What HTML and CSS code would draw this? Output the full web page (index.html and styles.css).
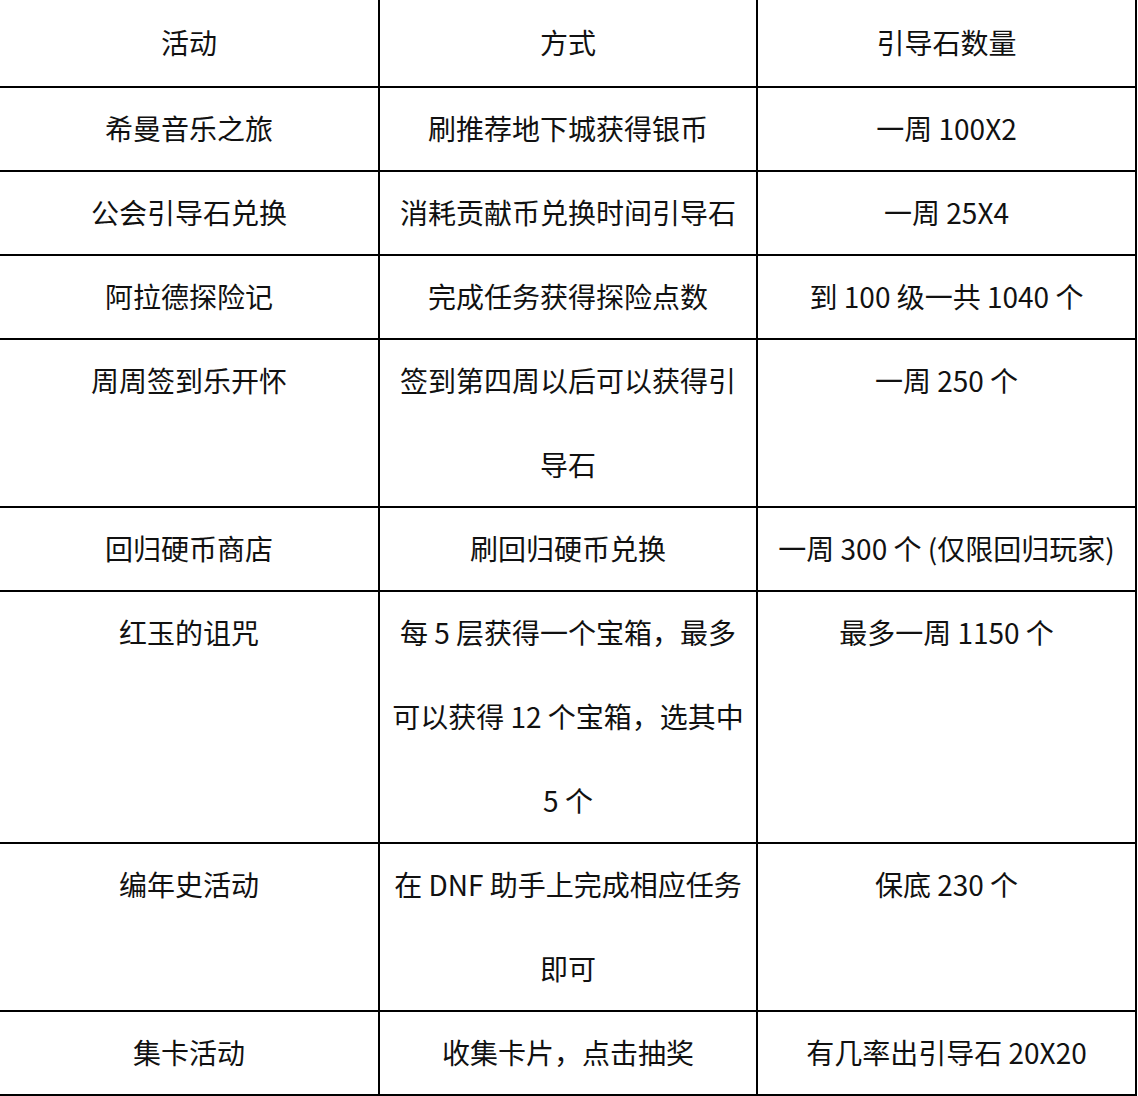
FILE: index.html
```html
<!DOCTYPE html>
<html lang="zh-CN">
<head>
<meta charset="utf-8">
<title>引导石获取途径</title>
<link rel="stylesheet" href="styles.css">
</head>
<body>
<div class="table">
  <div class="cell head"><span>活动</span></div>
  <div class="cell head"><span>方式</span></div>
  <div class="cell head"><span>引导石数量</span></div>

  <div class="cell"><span>希曼音乐之旅</span></div>
  <div class="cell"><span>刷推荐地下城获得银币</span></div>
  <div class="cell"><span>一周 100X2</span></div>

  <div class="cell"><span>公会引导石兑换</span></div>
  <div class="cell"><span>消耗贡献币兑换时间引导石</span></div>
  <div class="cell"><span>一周 25X4</span></div>

  <div class="cell"><span>阿拉德探险记</span></div>
  <div class="cell"><span>完成任务获得探险点数</span></div>
  <div class="cell"><span>到 100 级一共 1040 个</span></div>

  <div class="cell"><span>周周签到乐开怀</span></div>
  <div class="cell"><span>签到第四周以后可以获得引<br>导石</span></div>
  <div class="cell"><span>一周 250 个</span></div>

  <div class="cell"><span>回归硬币商店</span></div>
  <div class="cell"><span>刷回归硬币兑换</span></div>
  <div class="cell"><span>一周 300 个 (仅限回归玩家)</span></div>

  <div class="cell"><span>红玉的诅咒</span></div>
  <div class="cell"><span>每 5 层获得一个宝箱，最多<br>可以获得 12 个宝箱，选其中<br>5 个</span></div>
  <div class="cell"><span>最多一周 1150 个</span></div>

  <div class="cell"><span>编年史活动</span></div>
  <div class="cell"><span>在 DNF 助手上完成相应任务<br>即可</span></div>
  <div class="cell"><span>保底 230 个</span></div>

  <div class="cell"><span>集卡活动</span></div>
  <div class="cell"><span>收集卡片，点击抽奖</span></div>
  <div class="cell"><span>有几率出引导石 20X20</span></div>
</div>
</body>
</html>
```

FILE: styles.css
```css
html, body {
  margin: 0;
  padding: 0;
  background: #ffffff;
}

.table {
  display: grid;
  grid-template-columns: 378px 376px 377px;
  gap: 2px;
  width: 1135px;
  background: #000000;
  border-right: 2px solid #000000;
  border-bottom: 2px solid #000000;
  font-family: "Noto Sans CJK SC", "Noto Sans", sans-serif;
  font-size: 28px;
  color: #111111;
}

.cell {
  background: #ffffff;
  text-align: center;
  line-height: 84px;
}

.cell span {
  display: block;
  margin-top: -2px;
}

.cell.head {
  padding: 1px 0;
}

.cell.head span {
  margin-top: -1px;
  margin-bottom: 1px;
}
```
